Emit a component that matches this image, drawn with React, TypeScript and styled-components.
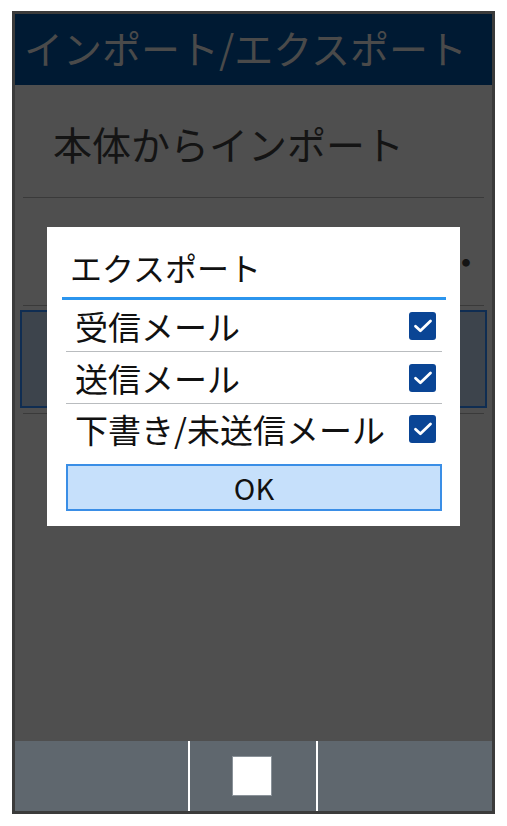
import React from 'react';
import styled, { createGlobalStyle } from 'styled-components';

const GlobalStyle = createGlobalStyle`
  html, body {
    margin: 0;
    padding: 0;
    background: #ffffff;
  }
  body {
    font-family: "Noto Sans CJK JP", "Noto Sans", sans-serif;
  }
`;

interface ExportOption {
  label: string;
  checked: boolean;
}

const exportOptions: ExportOption[] = [
  { label: '受信メール', checked: true },
  { label: '送信メール', checked: true },
  { label: '下書き/未送信メール', checked: true }
];

const CheckIcon: React.FC = () => (
  <svg width="20" height="16" viewBox="0 0 20 16" fill="none">
    <path d="M2.5 8.2 L7.4 12.8 L17.5 3" stroke="#ffffff" strokeWidth="2.8" strokeLinecap="round" strokeLinejoin="round" />
  </svg>
);

const App: React.FC = () => {
  return (
    <>
      <GlobalStyle />
      <Page>
        <Frame>
          <Header>インポート/エクスポート</Header>
          <MenuList>
            <FirstRow>
              <RowText>本体からインポート</RowText>
            </FirstRow>
            <MenuRow>
              <RowText>本体へエクスポート</RowText>
              <MoreDot>・</MoreDot>
            </MenuRow>
            <MenuRow>
              <Highlight />
            </MenuRow>
          </MenuList>
          <BottomBar>
            <BarSlot />
            <BarSlot $center>
              <StopSquare />
            </BarSlot>
            <BarSlot />
          </BottomBar>

          <Dialog>
            <DialogTitle>エクスポート</DialogTitle>
            <OptionList>
              {exportOptions.map((option, index) => (
                <OptionRow key={index} $last={index === exportOptions.length - 1}>
                  <OptionLabel>{option.label}</OptionLabel>
                  <Checkbox>{option.checked && <CheckIcon />}</Checkbox>
                </OptionRow>
              ))}
            </OptionList>
            <OkButton>OK</OkButton>
          </Dialog>
        </Frame>
      </Page>
    </>
  );
};

const Page = styled.div`
  width: 507px;
  height: 826px;
  padding: 11px 0 0 12px;
  box-sizing: border-box;
`;

const Frame = styled.div`
  position: relative;
  width: 483px;
  height: 803px;
  border: 3px solid #3b3b3b;
  box-sizing: border-box;
  background: #4f4f4f;
  display: flex;
  flex-direction: column;
  overflow: hidden;
`;

const Header = styled.div`
  height: 71px;
  background: #001a33;
  color: #4a4a4a;
  font-size: 39px;
  line-height: 66px;
  padding-left: 9px;
  white-space: nowrap;
`;

const MenuList = styled.div`
  flex: 1;
  display: flex;
  flex-direction: column;
  padding: 0 8px;
`;

const MenuRow = styled.div`
  position: relative;
  height: 108px;
  border-bottom: 1px solid #3a3a3a;
  display: flex;
  align-items: center;
  box-sizing: border-box;
`;

const FirstRow = styled(MenuRow)`
  height: 113px;
  padding-top: 3px;
`;

const RowText = styled.div`
  font-size: 39px;
  color: #141414;
  padding-left: 30px;
  white-space: nowrap;
`;

const MoreDot = styled.div`
  margin-left: auto;
  padding-top: 18px;
  font-size: 36px;
  color: #141414;
`;

const Highlight = styled.div`
  position: absolute;
  top: 4px;
  bottom: 5px;
  left: -3px;
  right: -3px;
  background: #3d444c;
  border: 2px solid #0f2d52;
`;

const BottomBar = styled.div`
  height: 70px;
  background: #5f676e;
  display: grid;
  grid-template-columns: 173px 130px 1fr;
`;

const BarSlot = styled.div<{ $center?: boolean }>`
  display: flex;
  align-items: center;
  justify-content: center;
  border-left: ${({ $center }) => ($center ? '2px solid #ffffff' : 'none')};
  border-right: ${({ $center }) => ($center ? '2px solid #ffffff' : 'none')};
`;

const StopSquare = styled.div`
  width: 40px;
  height: 40px;
  background: #ffffff;
  border: 1px solid #8a9299;
  box-sizing: border-box;
  margin-right: 3px;
`;

const Dialog = styled.div`
  position: absolute;
  left: 32px;
  top: 213px;
  width: 413px;
  height: 299px;
  background: #ffffff;
  box-sizing: border-box;
  padding: 0 14px 0 15px;
  display: flex;
  flex-direction: column;
`;

const DialogTitle = styled.div`
  height: 70px;
  line-height: 80px;
  padding-left: 8px;
  font-size: 32px;
  color: #111111;
  border-bottom: 3px solid #2b95ee;
  white-space: nowrap;
`;

const OptionList = styled.div`
  display: flex;
  flex-direction: column;
  padding: 0 4px;
`;

const OptionRow = styled.div<{ $last?: boolean }>`
  height: ${({ $last }) => ($last ? '50px' : '51px')};
  display: flex;
  align-items: center;
  justify-content: space-between;
  border-bottom: ${({ $last }) => ($last ? 'none' : '1px solid #b9bcbf')};
  padding: 0 6px 0 9px;
`;

const OptionLabel = styled.div`
  font-size: 33px;
  color: #111111;
  white-space: nowrap;
`;

const Checkbox = styled.div`
  width: 27px;
  height: 28px;
  border-radius: 3px;
  background: #0a4595;
  display: flex;
  align-items: center;
  justify-content: center;
`;

const OkButton = styled.div`
  margin: 10px 4px 0 4px;
  height: 47px;
  box-sizing: border-box;
  background: #c6e0fb;
  border: 2px solid #3a8ee6;
  display: flex;
  align-items: center;
  justify-content: center;
  font-size: 29px;
  line-height: 1;
  color: #111111;
`;

export default App;
